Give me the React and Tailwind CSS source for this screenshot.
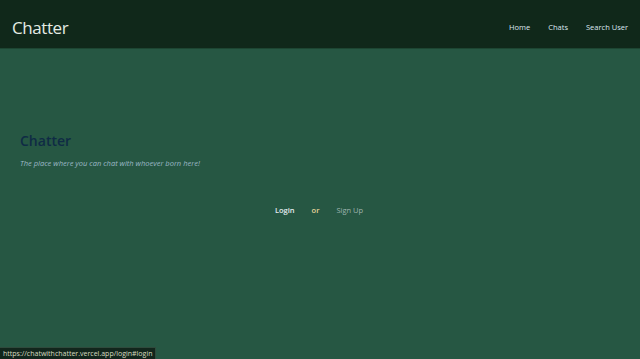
import React from "react";

const App = () => {
  return (
    <div
      className="relative min-h-screen w-full bg-[#265743] flex flex-col"
      style={{ fontFamily: '"Open Sans", "Noto Sans", sans-serif' }}
    >
      {/* Header */}
      <header className="h-[49px] bg-[#10281a] border-b border-[#1d4632] flex items-center justify-between pl-[12px] pr-[12px] pt-[7px]">
        <span className="text-[17px] text-[#e4ece4] tracking-tight">Chatter</span>
        <nav className="flex items-center gap-[18px] text-[7.5px] text-[#dbe6f0]">
          <a href="#home">Home</a>
          <a href="#chats">Chats</a>
          <a href="#search">Search User</a>
        </nav>
      </header>

      {/* Hero */}
      <main className="flex-1 flex flex-col">
        <div className="pl-[20px] pt-[85px]">
          <h1 className="text-[14px] font-semibold text-[#0f2b45] leading-none">Chatter</h1>
          <p className="mt-[10px] text-[7.5px] italic text-[#9cb8c6]">
            The place where you can chat with whoever born here!
          </p>
        </div>

        <div className="mt-[36px] flex items-center justify-center gap-[17px] text-[7.5px] pr-[2px]">
          <a href="#login" className="text-[#e4ecf0] font-semibold">Login</a>
          <span className="text-[#e8d49a] font-semibold">or</span>
          <a href="#signup" className="text-[#9fb4ae]">Sign Up</a>
        </div>
      </main>

      {/* Browser status bar */}
      <div className="absolute left-0 bottom-0 bg-[#12261c] border-t border-r border-[#2f4a3c] px-[3px] py-[1px] text-[7px] text-[#d8dcc0] leading-[9px]">
        https://chatwithchatter.vercel.app/login#login
      </div>
    </div>
  );
};

export default App;
